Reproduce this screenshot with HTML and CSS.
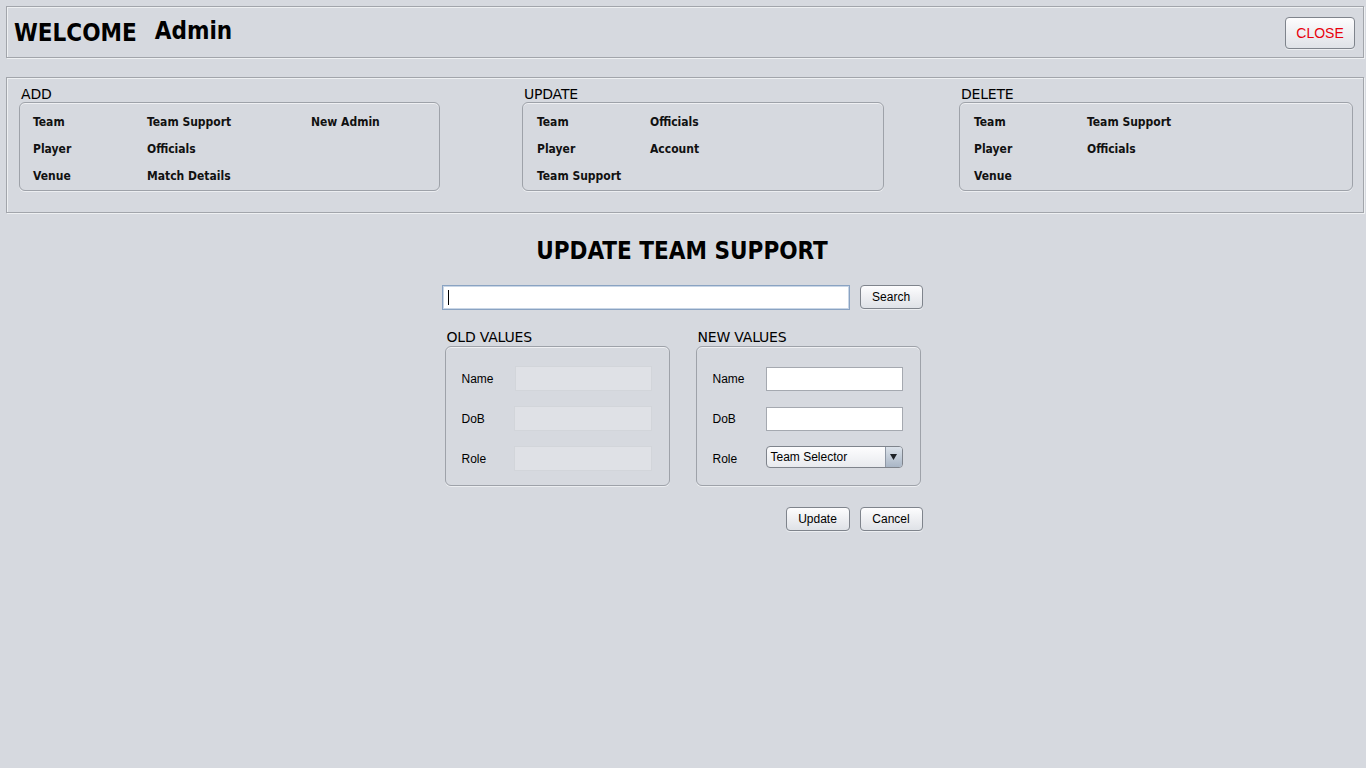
FILE: index.html
```html
<!DOCTYPE html>
<html lang="en">
<head>
<meta charset="utf-8">
<title>Update Team Support</title>
<link rel="stylesheet" href="styles.css">
</head>
<body>
<header class="panel top">
  <h1 class="welcome"><span class="w-word">WELCOME</span><span class="w-name">Admin</span></h1>
  <button class="btn close">CLOSE</button>
</header>

<nav class="panel menu">
  <section class="grp grp-add">
    <div class="grp-label">ADD</div>
    <div class="grp-box">
      <ul class="items">
        <li>Team</li><li>Team Support</li><li>New Admin</li>
        <li>Player</li><li>Officials</li><li></li>
        <li>Venue</li><li>Match Details</li><li></li>
      </ul>
    </div>
  </section>
  <section class="grp grp-update">
    <div class="grp-label">UPDATE</div>
    <div class="grp-box">
      <ul class="items">
        <li>Team</li><li>Officials</li><li></li>
        <li>Player</li><li>Account</li><li></li>
        <li>Team Support</li><li></li><li></li>
      </ul>
    </div>
  </section>
  <section class="grp grp-delete">
    <div class="grp-label">DELETE</div>
    <div class="grp-box">
      <ul class="items">
        <li>Team</li><li>Team Support</li><li></li>
        <li>Player</li><li>Officials</li><li></li>
        <li>Venue</li><li></li><li></li>
      </ul>
    </div>
  </section>
</nav>

<main class="content">
  <h2 class="title">UPDATE TEAM SUPPORT</h2>
  <div class="search-row">
    <div class="search-field"><span class="caret"></span></div>
    <button class="btn small">Search</button>
  </div>
  <div class="values">
    <section class="vgrp">
      <div class="grp-label">OLD VALUES</div>
      <div class="vbox">
        <div class="frow"><span class="flabel">Name</span><span class="field disabled f-name"></span></div>
        <div class="frow"><span class="flabel">DoB</span><span class="field disabled"></span></div>
        <div class="frow"><span class="flabel">Role</span><span class="field disabled"></span></div>
      </div>
    </section>
    <section class="vgrp">
      <div class="grp-label">NEW VALUES</div>
      <div class="vbox">
        <div class="frow"><span class="flabel">Name</span><span class="field edit"></span></div>
        <div class="frow"><span class="flabel">DoB</span><span class="field edit"></span></div>
        <div class="frow"><span class="flabel">Role</span>
          <span class="combo"><span class="combo-text">Team Selector</span><span class="combo-arrow"><svg width="7" height="6" viewBox="0 0 7 6"><path d="M0 0h7L3.5 6z" fill="#1d2127"/></svg></span></span>
        </div>
      </div>
    </section>
  </div>
  <div class="actions">
    <button class="btn small upd">Update</button>
    <button class="btn small">Cancel</button>
  </div>
</main>
</body>
</html>
```
FILE: styles.css
```css
* { box-sizing: border-box; }
html, body { height: 100%; }
body {
  margin: 0;
  padding: 6px 2px 0 6px;
  background: #d6d9df;
  font-family: "Liberation Sans", Arial, sans-serif;
  color: #000;
}
.panel {
  border: 1px solid #a2a5ab;
  box-shadow: 1px 1px 0 #eef0f2, inset 1px 1px 0 #eef0f2;
}
.top {
  height: 52px;
  display: flex;
  align-items: center;
  justify-content: space-between;
  padding: 0 8px 0 7px;
}
.welcome {
  margin: 0;
  font-family: "DejaVu Sans Condensed", "DejaVu Sans", sans-serif;
  font-stretch: condensed;
  font-weight: bold;
  font-size: 24px;
  line-height: 30px;
  display: flex;
  align-items: baseline;
}
.w-word { position: relative; top: 1px; }
.w-name { margin-left: 18px; position: relative; top: -1px; }
.btn {
  font-family: "Liberation Sans", Arial, sans-serif;
  border: 1px solid #7f848c;
  border-radius: 4px;
  background: linear-gradient(#fdfdfe 0%, #eff0f3 45%, #dfe2e7 100%);
  box-shadow: 0 1px 0 #eceef1;
  color: #000;
  padding: 0;
  cursor: default;
}
.close {
  width: 70px;
  height: 32px;
  color: #e8000b;
  font-size: 14px;
  margin-top: 2px;
}
.menu {
  margin-top: 19px;
  height: 136px;
  padding: 8px 0 0 12px;
  display: flex;
  align-items: flex-start;
}
.grp-label {
  font-family: "DejaVu Sans", sans-serif;
  font-size: 14px;
  line-height: 16px;
  padding-left: 2px;
  letter-spacing: -0.2px;
}
.grp-box {
  border: 1px solid #9ea2a9;
  border-radius: 6px;
  box-shadow: inset 0 1px 0 #eff0f3, 0 1px 0 #eceef1;
  height: 89px;
  padding: 6px 0 0 13px;
}
.grp-add { width: 421px; }
.grp-update { width: 362px; margin-left: 82px; }
.grp-delete { width: 394px; margin-left: 75px; }
.grp-update .grp-box { padding-left: 14px; }
.grp-delete .grp-box { padding-left: 14px; }
.items {
  list-style: none;
  margin: 0;
  padding: 0;
  display: grid;
  grid-template-columns: 114px 164px auto;
  grid-auto-rows: 27px;
  font-family: "DejaVu Sans Condensed", "DejaVu Sans", sans-serif;
  font-stretch: condensed;
  font-weight: bold;
  font-size: 12px;
  line-height: 27px;
  color: #111;
}
.grp-update .items, .grp-delete .items { grid-template-columns: 113px 164px auto; }
.content {
  width: 481px;
  margin: 0 auto;
  position: relative;
  left: -3px;
}
.title {
  margin: 23px 0 0;
  text-align: center;
  font-family: "DejaVu Sans Condensed", "DejaVu Sans", sans-serif;
  font-stretch: condensed;
  font-weight: bold;
  font-size: 24px;
  line-height: 30px;
}
.search-row {
  margin-top: 19px;
  display: flex;
  align-items: flex-start;
  gap: 10px;
}
.search-field {
  width: 409px;
  height: 25px;
  background: #fff;
  border: 1px solid #8aa3c2;
  box-shadow: inset 0 0 0 1px #c9d6e6;
  display: flex;
  align-items: center;
  padding-left: 5px;
}
.caret {
  width: 1px;
  height: 15px;
  background: #000;
}
.small {
  width: 63px;
  height: 24px;
  font-size: 12px;
}
.values {
  margin-top: 19px;
  padding-left: 3px;
  display: flex;
  gap: 26px;
}
.vgrp { width: 225px; }
.vgrp .grp-label { line-height: 17px; }
.vbox {
  border: 1px solid #9ea2a9;
  border-radius: 6px;
  box-shadow: inset 0 1px 0 #eff0f3, 0 1px 0 #eceef1;
  height: 140px;
  padding: 19px 0 0 16px;
  display: flex;
  flex-direction: column;
  gap: 15px;
}
.frow {
  display: flex;
  align-items: center;
  height: 25px;
  font-size: 12px;
}
.flabel { width: 52px; flex: none; }
.field {
  display: block;
  width: 138px;
  height: 25px;
}
.disabled {
  background: #dfe1e6;
  border: 1px solid #d2d5da;
}
.f-name { margin-left: 1px; width: 137px; }
.edit {
  width: 137px;
  height: 24px;
  background: #fff;
  border: 1px solid #a5a9b0;
  margin-left: 1px;
}
.combo {
  margin-left: 1px;
  align-self: flex-start;
  width: 137px;
  height: 22px;
  border: 1px solid #7f848c;
  border-radius: 4px;
  background: linear-gradient(#fdfdfe, #e8eaee);
  display: flex;
  align-items: stretch;
  overflow: hidden;
}
.combo-text {
  flex: 1;
  padding-left: 4px;
  line-height: 20px;
  font-size: 12px;
}
.combo-arrow {
  width: 17px;
  border-left: 1px solid #8f98a5;
  background: linear-gradient(#dbe2ea, #a9b6c6);
  display: flex;
  align-items: center;
  justify-content: center;
}
.actions {
  margin-top: 21px;
  display: flex;
  justify-content: flex-end;
  gap: 10px;
}
.upd { width: 64px; }
```
